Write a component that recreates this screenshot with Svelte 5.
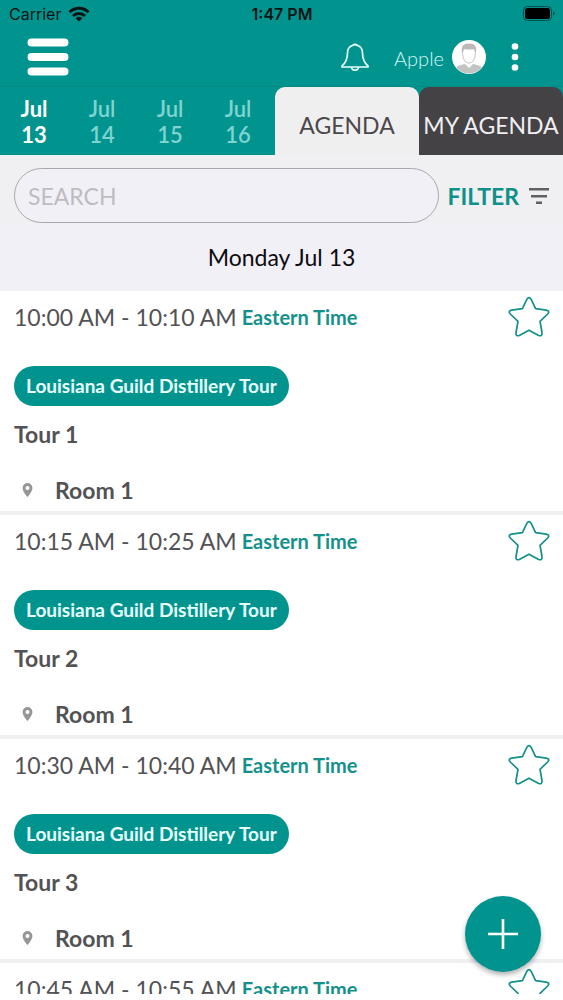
<script lang="ts">
	const days = [
		{ month: 'Jul', date: 13 },
		{ month: 'Jul', date: 14 },
		{ month: 'Jul', date: 15 },
		{ month: 'Jul', date: 16 }
	];

	const sessions = [
		{ time: '10:00 AM - 10:10 AM', title: 'Tour 1', room: 'Room 1' },
		{ time: '10:15 AM - 10:25 AM', title: 'Tour 2', room: 'Room 1' },
		{ time: '10:30 AM - 10:40 AM', title: 'Tour 3', room: 'Room 1' },
		{ time: '10:45 AM - 10:55 AM', title: 'Tour 4', room: 'Room 1' }
	];

	let selectedDay = $state(13);
	let activeTab = $state('agenda');
	let search = $state('');
	let starred: Record<string, boolean> = $state({});

	function toggleStar(title: string) {
		starred[title] = !starred[title];
	}
</script>

<div class="app">
	<div class="status">
		<div class="carrier">
			<span>Carrier</span>
			<svg width="22" height="16" viewBox="0 0 22 16" aria-hidden="true">
				<g fill="none" stroke="#061514" stroke-width="3">
					<path d="M1.5 6.2a13.4 13.4 0 0 1 19 0" />
					<path d="M5 10a8.6 8.6 0 0 1 12 0" />
				</g>
				<path d="M11 15.5 7.6 12.2a4.8 4.8 0 0 1 6.8 0z" fill="#061514" />
			</svg>
		</div>
		<div class="clock">1:47 PM</div>
		<div class="battery">
			<svg width="32" height="16" viewBox="0 0 32 16" aria-hidden="true">
				<rect x="0.5" y="0.5" width="28" height="14" rx="4" fill="none" stroke="#04504d" />
				<rect x="2" y="2" width="25" height="11" rx="2.5" fill="#000" />
				<path d="M30 5.5v4q1.8-.6 1.8-2t-1.8-2z" fill="#04504d" />
			</svg>
		</div>
	</div>

	<header>
		<button class="icon-btn" aria-label="Menu">
			<svg width="42" height="38" viewBox="0 0 42 38">
				<g stroke="#fff" stroke-width="8" stroke-linecap="round">
					<path d="M4.500 4.500h33M4.500 19h33M4.500 33.500h33" />
				</g>
			</svg>
		</button>
		<div class="account">
			<button class="icon-btn" aria-label="Notifications">
				<svg width="28" height="28" viewBox="0 0 28 28" fill="none" stroke="#eaffff" stroke-width="1.7" stroke-linejoin="round">
					<path d="M11.500 2.500Q14 .500 16.500 2.500C20 3.500 21.500 6.500 21.500 10c0 6 1.500 9.500 5.500 13v1H1v-1c4-3.500 5.500-7 5.500-13 0-3.500 1.500-6.500 5-7.500z" />
					<path d="M10.500 24a3.500 3.200 0 0 0 7 0" />
				</svg>
			</button>
			<button class="user">
				<span>Apple</span>
				<svg width="34" height="34" viewBox="0 0 34 34" aria-hidden="true">
					<defs>
						<clipPath id="avatar"><circle cx="17" cy="17" r="16.500" /></clipPath>
					</defs>
					<circle cx="17" cy="17" r="17" fill="#fff" />
					<g clip-path="url(#avatar)">
						<path d="M2 34c0-6 3-8.500 9-9.500l3-1.500h6l3 1.500c6 1 9 3.500 9 9.500z" fill="#c4c3c4" />
						<path d="m12.500 23.500 4.500 4.500 4.500-4.500v-3h-9z" fill="#fff" />
						<path d="M10.500 11c0 7 2 12 6.500 12s6.500-5 6.500-12l-1.500-4H12z" fill="#fff" stroke="#c4c3c4" />
						<path d="M10 12.500c-1-6 1-9 7-9s8 3 7 9h-1l-.8-3.500c-3 .8-7.400.8-10.400 0L11 12.500z" fill="#bbb9ba" />
					</g>
				</svg>
			</button>
			<button class="icon-btn" aria-label="More">
				<svg width="8" height="28" viewBox="0 0 8 28" fill="#fff">
					<circle cx="4" cy="3.500" r="3.300" />
					<circle cx="4" cy="14" r="3.300" />
					<circle cx="4" cy="24.500" r="3.300" />
				</svg>
			</button>
		</div>
	</header>

	<nav>
		<div class="days">
			{#each days as day}
				<button
					class="day"
					class:selected={day.date === selectedDay}
					onclick={() => (selectedDay = day.date)}
				>
					<span>{day.month}</span>
					<span>{day.date}</span>
				</button>
			{/each}
		</div>
		<button class="tab" class:active={activeTab === 'agenda'} onclick={() => (activeTab = 'agenda')}>
			AGENDA
		</button>
		<button class="tab" class:active={activeTab === 'mine'} onclick={() => (activeTab = 'mine')}>
			MY AGENDA
		</button>
	</nav>

	<div class="tools">
		<input type="text" placeholder="SEARCH" aria-label="Search" bind:value={search} />
		<button class="filter">
			<span>FILTER</span>
			<svg width="22" height="18" viewBox="0 0 22 18" fill="#626162" aria-hidden="true">
				<path d="M1 1h20v2.500H1zM3 8h16v2.500H3zM8 14.500h6V17H8z" />
			</svg>
		</button>
	</div>

	<h1>Monday Jul {selectedDay}</h1>

	<main>
		{#each sessions as session}
			<article>
				<div class="row">
					<span class="time">{session.time}</span>
					<span class="zone">Eastern Time</span>
					<button
						class="icon-btn star"
						aria-label="Add {session.title} to my agenda"
						aria-pressed={!!starred[session.title]}
						onclick={() => toggleStar(session.title)}
					>
						<svg width="42" height="42" viewBox="0 0 42 42">
							<path
								d="M18.900 3.200Q21 .2 23.100 3.200L27.600 12.600 38.300 14.100Q42.300 15.100 39.700 18L32 25.300 34 36.500Q34.200 40.700 30.700 39.500L21 34.200 11.300 39.500Q7.800 40.700 8 36.500L10 25.300 2.300 18Q-.3 15.100 3.700 14.100L14.400 12.600Z"
								fill={starred[session.title] ? '#01948f' : 'none'}
								stroke="#149089"
								stroke-width="1.700"
								stroke-linejoin="round"
							/>
						</svg>
					</button>
				</div>
				<div class="tag">Louisiana Guild Distillery Tour</div>
				<h2>{session.title}</h2>
				<div class="room">
					<svg width="11" height="14" viewBox="0 0 11 14" aria-hidden="true">
						<path
							d="M5.500 0A4.900 4.900 0 0 0 .6 4.900C.6 8.500 5.500 14 5.500 14s4.900-5.500 4.900-9.100A4.900 4.900 0 0 0 5.500 0zm0 3a2 2 0 1 1 0 4 2 2 0 0 1 0-4z"
							fill="#979697"
						/>
					</svg>
					<span>{session.room}</span>
				</div>
			</article>
		{/each}
	</main>

	<button class="fab" aria-label="Add session">
		<svg width="30" height="30" viewBox="0 0 30 30" stroke="#fff" stroke-width="2.600">
			<path d="M15 0v30M0 15h30" />
		</svg>
	</button>
</div>

<style>
	:global(body) {
		margin: 0;
	}
	.app {
		display: flex;
		flex-direction: column;
		box-sizing: border-box;
		height: 100vh;
		padding-bottom: 6px;
		background: #fff;
		color: #535254;
		font-family: Lato, 'Liberation Sans', sans-serif;
		font-size: 23px;
		line-height: 32px;
	}
	button {
		margin: 0;
		padding: 0;
		border: 0;
		background: none;
		color: inherit;
		font: inherit;
		cursor: pointer;
	}
	svg {
		display: block;
		flex: none;
	}
	.status {
		display: grid;
		grid-template-columns: 1fr auto 1fr;
		align-items: center;
		height: 28px;
		padding: 0 8px 0 9px;
		background: #01948f;
		color: #061514;
		font-family: Inter, 'Liberation Sans', sans-serif;
		font-size: 16px;
		line-height: 20px;
	}
	.carrier {
		display: flex;
		align-items: center;
		gap: 7px;
	}
	.clock {
		font-weight: 600;
	}
	.battery {
		justify-self: end;
	}
	header {
		display: flex;
		justify-content: space-between;
		align-items: center;
		height: 58px;
		padding: 0 44px 0 27px;
		border-bottom: 1px solid #0a8984;
		background: #01948f;
	}
	.account {
		display: flex;
		align-items: center;
		gap: 25px;
	}
	.user {
		display: flex;
		align-items: center;
		gap: 8px;
		color: #d5f5f4;
		font-size: 20px;
		font-weight: 300;
	}
	.user span {
		padding-top: 2px;
	}
	nav {
		display: flex;
		height: 68px;
		background: #01948f;
	}
	.days {
		display: flex;
		flex: 1;
		padding-right: 3px;
	}
	.day {
		display: flex;
		flex: 1;
		flex-direction: column;
		align-items: center;
		justify-content: center;
		padding-top: 2px;
		color: #7fd3d1;
		font-size: 22px;
		font-weight: 600;
		line-height: 26px;
	}
	.day.selected {
		color: #fff;
		font-weight: 700;
	}
	.tab {
		width: 144px;
		padding-top: 8px;
		border-radius: 10px 10px 0 0;
		background: #444245;
		color: #f0eff2;
		white-space: nowrap;
	}
	.tab.active {
		background: #f0eff0;
		color: #4a484a;
	}
	.tools {
		display: flex;
		align-items: center;
		gap: 8px;
		padding: 13px 13px 0 14px;
		background: #f0eff1;
	}
	input {
		flex: 1;
		box-sizing: border-box;
		min-width: 0;
		height: 55px;
		padding: 0 13px;
		border: 1px solid #a9a8ac;
		border-radius: 28px;
		outline: none;
		background: #f2f0f7;
		color: #535254;
		font: inherit;
	}
	input::placeholder {
		color: #bebcc2;
		opacity: 1;
	}
	.filter {
		display: flex;
		align-items: center;
		gap: 9px;
		color: #0f9089;
		font-weight: 700;
	}
	h1 {
		margin: 0;
		padding: 18px 0;
		background: #f2f0f7;
		color: #0c0b0e;
		font-size: 23px;
		font-weight: 400;
		text-align: center;
	}
	main {
		flex: 1;
		min-height: 0;
		overflow: hidden;
	}
	article {
		padding: 0 13px 5px 14px;
		border-bottom: 4px solid #f0eff1;
	}
	.row {
		display: flex;
		align-items: center;
		height: 52px;
	}
	.time {
		white-space: nowrap;
	}
	.zone {
		margin-left: 5px;
		color: #14918a;
		font-size: 20px;
		font-weight: 700;
	}
	.star {
		margin-left: auto;
	}
	.tag {
		width: fit-content;
		margin: 23px 0 12px;
		padding: 4px 12px;
		border-radius: 20px;
		background: #01948f;
		color: #e9fffd;
		font-size: 19px;
		font-weight: 700;
	}
	h2 {
		margin: 0 0 24px;
		font-size: 23px;
		font-weight: 700;
	}
	.room {
		display: flex;
		align-items: center;
		gap: 22px;
		padding-left: 8px;
		font-size: 23px;
		font-weight: 700;
	}
	.fab {
		position: fixed;
		right: 22px;
		bottom: 28px;
		display: grid;
		place-items: center;
		width: 76px;
		height: 76px;
		border-radius: 50%;
		background: #01948f;
		box-shadow: 0 3px 5px rgba(0, 0, 0, 0.3);
	}
</style>
